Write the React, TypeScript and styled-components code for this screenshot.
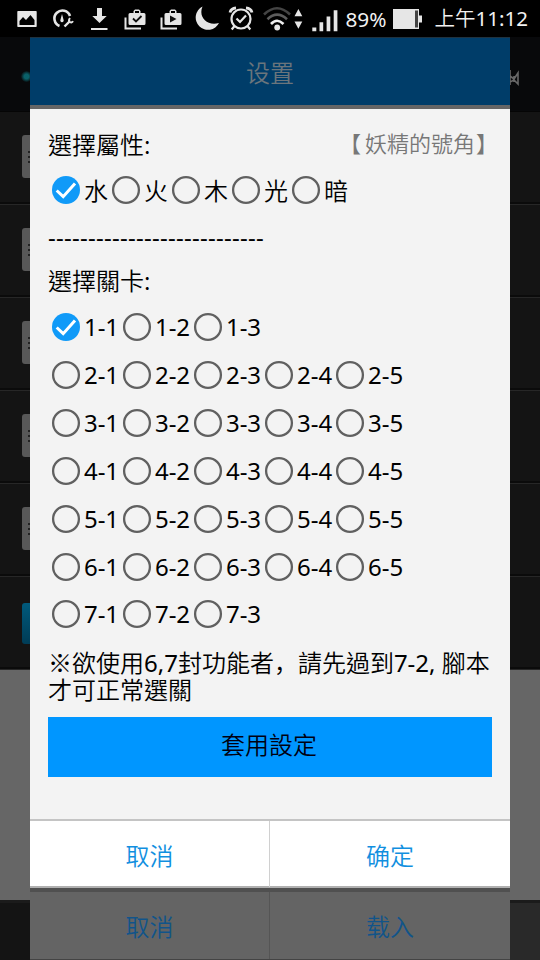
import React from "react";
import styled, { createGlobalStyle, css } from "styled-components";

const Global = createGlobalStyle`
  * { box-sizing: border-box; }
  body { margin: 0; background: #000; font-family: "Noto Sans", "Noto Sans CJK TC", sans-serif; font-size: 24px; color: #000; }
`;

const Screen = styled.div`
  position: relative;
  width: 540px;
  height: 960px;
  overflow: hidden;
  display: flex;
  flex-direction: column;
  background: #000;
`;

const StatusBar = styled.header`
  height: 37px;
  flex: none;
  background: #000;
`;

const StatusIcons = styled.svg`
  display: block;
`;

const StatusText = styled.text`
  font-family: "Noto Sans", "Noto Sans CJK TC", sans-serif;
  font-size: 20.5px;
  font-weight: 400;
  fill: #f2f2f2;
`;

const LightSpan = styled.tspan`
  font-weight: 350;
`;

const Backdrop = styled.div`
  flex: 1;
  display: flex;
  flex-direction: column;
  background: #666;
`;

const AppBar = styled.div`
  height: 75px;
  flex: none;
  display: flex;
  align-items: center;
  justify-content: space-between;
  padding: 4px 20px 0 21px;
  background: #08090b;
  border-bottom: 1px solid #050505;
`;

const Dot = styled.span`
  width: 11px;
  height: 11px;
  border-radius: 50%;
  background: radial-gradient(circle, #0a6068 30%, #08303500 75%);
`;

const BackRow = styled.div`
  height: 93px;
  flex: none;
  display: flex;
  align-items: center;
  padding: 0 0 4px 22px;
  background: #141414;
  border-bottom: 1px solid #272727;
  box-shadow: inset 0 -2px 0 #0b0b0b;
`;

const BackThumb = styled.span<{ $active?: boolean }>`
  width: 44px;
  height: ${(p) => (p.$active ? 41 : 43)}px;
  margin-top: ${(p) => (p.$active ? 4 : 0)}px;
  border-radius: 3px;
  padding: 16px 0 0 6px;
  background: ${(p) => (p.$active ? "linear-gradient(#005a7c, #003c56)" : "#585858")};
  display: flex;
  flex-direction: column;
  gap: 3px;
`;

const ThumbLine = styled.i`
  width: 20px;
  height: 2px;
  background: #222;
`;

const BackFooter = styled.div`
  height: 60px;
  margin-top: auto;
  border-top: 3px solid #1b1b1b;
  background: linear-gradient(90deg, #141414 0 50%, #292929 50%);
`;

const ModalLayer = styled.div`
  position: absolute;
  inset: 37px 30px 0;
  display: flex;
  flex-direction: column;
`;

const Dialog = styled.section`
  height: 851px;
  flex: none;
  display: flex;
  flex-direction: column;
  background: #f3f3f3;
`;

const DialogTitle = styled.h1`
  margin: 0;
  height: 72px;
  flex: none;
  border-top: 1px solid #20323f;
  border-bottom: 4px solid #666;
  background: #003d69;
  color: #6b757c;
  font: 350 24px/68px "Noto Sans CJK SC", sans-serif;
  text-align: center;
`;

const Body = styled.div`
  flex: 1;
  display: flex;
  flex-direction: column;
  padding: 17px 18px 0;
`;

const HeadRow = styled.div`
  display: flex;
  justify-content: space-between;
  height: 40px;
  margin-right: -6px;
`;

const Label = styled.h2`
  margin: 0;
  font-family: "Noto Sans CJK TC", sans-serif;
  font-weight: 350;
  font-size: 24px;
  line-height: 36px;
  height: 40px;
`;

const Game = styled.span`
  display: flex;
  gap: 1px;
  font: 350 22px/32px "Noto Sans CJK TC", sans-serif;
  color: #777;
  white-space: nowrap;
`;

const OpenBracket = styled.span`
  margin-right: 3px;
`;

const Divider = styled.div`
  height: 48px;
  line-height: 46px;
  letter-spacing: 0.27px;
  white-space: nowrap;
`;

const StageGrid = styled.div`
  padding-top: 1px;
`;

const OptionRow = styled.div<{ $cjk?: boolean }>`
  display: flex;
  align-items: center;
  height: ${(p) => (p.$cjk ? 48 : 47.93)}px;
  ${(p) =>
    p.$cjk
      ? css`
          font-family: "Noto Sans CJK TC", sans-serif;
          font-weight: 350;
        `
      : css`
          letter-spacing: -0.06px;
        `}
`;

const Option = styled.label`
  display: flex;
  align-items: center;
  line-height: 34px;
  white-space: nowrap;
`;

const RadioMark = styled.svg`
  width: 30px;
  height: 30px;
  margin: 0 3px;
`;

const Note = styled.div`
  margin: 10px 0 0;
  font-weight: 350;
  white-space: nowrap;
`;

const NoteLine = styled.p`
  margin: 0;
  height: 28px;
  line-height: 28px;
`;

const WideSign = styled.span`
  font-family: "Noto Sans CJK SC", sans-serif;
`;

const Digits = styled.span`
  font-weight: 400;
`;

const Apply = styled.button`
  height: 60px;
  margin: 13px 0 0;
  padding: 0 2px 6px 0;
  border: 0;
  background: #0096ff;
  color: #001;
  font: 350 24px/54px "Noto Sans CJK TC", sans-serif;
  text-align: center;
`;

const Actions = styled.footer<{ $dim?: boolean }>`
  display: grid;
  grid-template-columns: 1fr 1fr;
  flex: none;
  ${(p) =>
    p.$dim
      ? css`
          height: 72px;
          background: #646464;
          border-top: 4px solid #505050;
          border-bottom: 1px solid #444;
        `
      : css`
          height: 69px;
          background: #fff;
          border-top: 2px solid #c4c4c4;
          border-bottom: 2px solid #b0b0b0;
        `}
`;

const Action = styled.button<{ $dim?: boolean }>`
  border: 0;
  padding: ${(p) => (p.$dim ? 1 : 2)}px 0 0;
  background: none;
  color: ${(p) => (p.$dim ? "#11548a" : "#118fdf")};
  font: 350 24px/64px "Noto Sans CJK SC", sans-serif;
  &:first-child {
    border-right: 1px solid ${(p) => (p.$dim ? "#555" : "#d0d0d0")};
  }
`;

const Radio = ({ on }: { on?: boolean }) => (
  <RadioMark viewBox="0 0 30 30">
    {on ? (
      <>
        <circle cx="15" cy="15" r="14" fill="#109af8" />
        <path d="M5.700 15.500 L12.200 21.700 L24 8.500" fill="none" stroke="#fff" strokeWidth="3" />
      </>
    ) : (
      <circle cx="15" cy="15" r="12.900" fill="none" stroke="#606060" strokeWidth="2.300" />
    )}
  </RadioMark>
);

const Options = ({ items, checked, cjk }: { items: string[]; checked?: string; cjk?: boolean }) => (
  <OptionRow $cjk={cjk}>
    {items.map((t) => (
      <Option key={t}>
        <Radio on={t === checked} />
        {t}
      </Option>
    ))}
  </OptionRow>
);

const stages = [3, 5, 5, 5, 5, 5, 3].map((n, i) =>
  Array.from({ length: n }, (_, j) => `${i + 1}-${j + 1}`)
);

const Status = () => (
  <StatusIcons width="540" height="37" viewBox="0 0 540 37" fill="#e6e6e6">
    <path fillRule="evenodd" d="M18 11h18q.7 0 .7.7v14.600q0 .7-.7.7H18q-.7 0-.7-.7V11.700q0-.7.7-.7z M19.500 25h15v-5l-4-5-4.500 5-3-3-3.500 4z" />
    <g fill="none" stroke="#e6e6e6">
      <path d="M59.500 26A8 8 0 1 1 70 16" strokeWidth="2.600" />
      <path d="M64.500 26.500L69.500 21.500" strokeWidth="2.400" />
      <path d="M70 18q-2 2.500 0 4.200q2 1 3-1" strokeWidth="1.900" />
    </g>
    <path d="M62 14l1.600 6a1.700 1.700 0 1 1-3.200 0z" />
    <path d="M97 8h5v8h4.700l-7.200 7-7.200-7H97z M91 28h16.500v2H91z" />
    <path d="M125.500 17.500V28.500H141" fill="none" stroke="#e6e6e6" strokeWidth="2" />
    <path fillRule="evenodd" d="M130 13h3.500v-2l1.500-1.500h4L140.500 11v2h3.500q1.500 0 1.500 1.500v9q0 1.500-1.500 1.500h-14q-1.500 0-1.500-1.500v-9q0-1.500 1.500-1.500z M135 11v2h4v-2z" />
    <path d="M133 18.500l3 3 5.500-5.500" fill="none" stroke="#111" strokeWidth="1.800" />
    <path d="M161.500 17.500V28.500H177" fill="none" stroke="#e6e6e6" strokeWidth="2" />
    <path fillRule="evenodd" d="M166 13h3.500v-2l1.500-1.500h4L176.500 11v2h3.500q1.500 0 1.500 1.500v9q0 1.500-1.500 1.500h-14q-1.500 0-1.500-1.500v-9q0-1.500 1.500-1.500z M171 11v2h4v-2z" />
    <path d="M170 15.500l6.500 3.500-6.500 3.500z" fill="#111" />
    <path d="M202.500 6.500A12.300 12.300 0 1 0 219 23C207 26.500 198 17 202.500 6.500z" />
    <g fill="none" stroke="#e6e6e6">
      <circle cx="241" cy="19" r="9.500" strokeWidth="2.200" />
      <path d="M236.500 18.500l3.500 3.500 6-6.500" strokeWidth="2.200" />
      <path d="M230 12.500q1-4 6-4.500M252 12.500q-1-4-6-4.500" strokeWidth="2.800" />
      <path d="M234.500 26l-2.800 3.500M247.500 26l2.800 3.500" strokeWidth="2.200" />
    </g>
    <g fill="none" strokeWidth="2.600">
      <path d="M264 14.500q13-12.500 26 0" stroke="#444" />
      <path d="M267.500 19.300q9.500-9.200 19.500 0" stroke="#5c5c5c" />
      <path d="M271 24q6-6.500 12.500 0" stroke="#eee" />
    </g>
    <circle cx="277.200" cy="27.500" r="2.900" />
    <path d="M294.500 16.200l3.900-7.200 3.900 7.200z M294.500 21.500h7.800l-3.900 7.200z" />
    <path d="M312.300 27.500h4v3.700h-4z M319.500 22.200h3.700v9h-3.700z M326.600 16.500h3.700v14.700h-3.700z M333.700 10.200h3.700v21h-3.700z" />
    <StatusText x="345.500" y="26.800" textLength="41" lengthAdjust="spacingAndGlyphs">89%</StatusText>
    <path d="M393 9h26v20h-26z M419 15.500h3v7h-3z" />
    <path d="M415 10.500h3v17h-3z" fill="#444" />
    <StatusText x="434.500" y="26" textLength="93.500" lengthAdjust="spacingAndGlyphs">
      <LightSpan>上午</LightSpan>11:12
    </StatusText>
  </StatusIcons>
);

export default function App() {
  return (
    <>
      <Global />
      <Screen lang="zh-TW">
        <StatusBar><Status /></StatusBar>
        <Backdrop>
          <AppBar>
            <Dot />
            <svg width="12" height="20" viewBox="0 0 12 20" fill="none" stroke="#686868" strokeWidth="1.600">
              <path d="M2 4v15M2 10l4 3 4-6v11l-4-4-4 2M6 10v6" />
            </svg>
          </AppBar>
          {[0, 1, 2, 3, 4, 5].map((i) => (
            <BackRow key={i}>
              <BackThumb $active={i === 5}>
                {i < 5 && [0, 1, 2].map((n) => <ThumbLine key={n} />)}
              </BackThumb>
            </BackRow>
          ))}
          <BackFooter />
        </Backdrop>
        <ModalLayer>
          <Dialog>
            <DialogTitle lang="zh-CN">设置</DialogTitle>
            <Body>
              <HeadRow>
                <Label>選擇屬性:</Label>
                <Game>
                  <OpenBracket>【</OpenBracket>
                  <span>妖精的號角</span>
                  <span>】</span>
                </Game>
              </HeadRow>
              <Options cjk items={["水", "火", "木", "光", "暗"]} checked="水" />
              <Divider>---------------------------</Divider>
              <Label>選擇關卡:</Label>
              <StageGrid>
                {stages.map((row) => (
                  <Options key={row[0]} items={row} checked="1-1" />
                ))}
              </StageGrid>
              <Note>
                <NoteLine>
                  <WideSign>※</WideSign>欲使用<Digits>6,7</Digits>封功能者
                  <WideSign lang="zh-CN">，</WideSign>請先過到<Digits>7-2, </Digits>腳本
                </NoteLine>
                <NoteLine>才可正常選關</NoteLine>
              </Note>
              <Apply>套用設定</Apply>
            </Body>
            <Actions lang="zh-CN">
              <Action>取消</Action>
              <Action>确定</Action>
            </Actions>
          </Dialog>
          <Actions $dim lang="zh-CN">
            <Action $dim>取消</Action>
            <Action $dim>载入</Action>
          </Actions>
        </ModalLayer>
      </Screen>
    </>
  );
}
